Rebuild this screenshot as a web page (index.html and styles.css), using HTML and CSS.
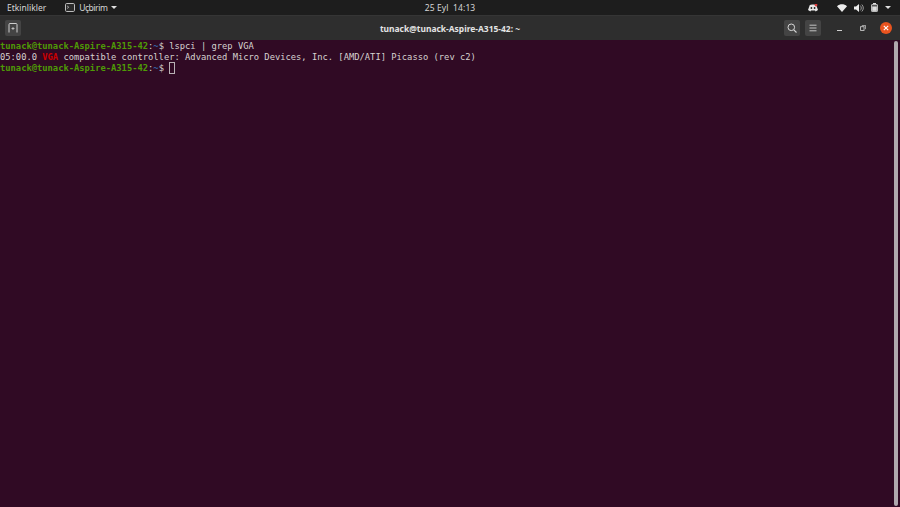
FILE: index.html
```html
<!DOCTYPE html>
<html lang="tr">
<head>
<meta charset="utf-8">
<title>Terminal</title>
<link rel="stylesheet" href="styles.css">
</head>
<body>
<header class="topbar">
  <div class="top-left">
    <span class="activities">Etkinlikler</span>
    <span class="app">
      <svg class="app-icon" width="10" height="9" viewBox="0 0 10 9"><rect x=".5" y=".5" width="9" height="8" rx="1.2" fill="#2a2a2a" stroke="#bdbdbd"/><path d="M2.2 3l1.5 1.2-1.5 1.2" fill="none" stroke="#cfcfcf" stroke-width=".8"/></svg>
      <span class="app-name">Uçbirim</span>
      <i class="caret"></i>
    </span>
  </div>
  <div class="clock">25 Eyl&nbsp; 14:13</div>
  <div class="tray">
    <svg class="discord" width="10" height="8" viewBox="0 0 10 8"><path d="M1.8 1 4 .5h2L8.2 1 10 6 7.6 7.500 7 6.500H3l-.6 1L0 6z" fill="#e8e8e8"/><circle cx="3.400" cy="4" r=".9" fill="#222"/><circle cx="6.600" cy="4" r=".9" fill="#222"/><circle cx="8" cy="1" r="1.400" fill="#e04040"/></svg>
    <svg class="wifi" width="10" height="8" viewBox="0 0 10 8"><path d="M0 2.200C3 -.4 7 -.4 10 2.200L5 8z" fill="#ececec"/></svg>
    <svg class="vol" width="10" height="8" viewBox="0 0 10 8"><path d="M0 2.500h2L5 0v8L2 5.500H0z" fill="#ececec"/><path d="M6.200 1.500c1.400 1.500 1.400 3.500 0 5M7.800.5c2 2 2 5 0 7" fill="none" stroke="#9a9a9a"/></svg>
    <svg class="batt" width="7" height="9" viewBox="0 0 7 9"><rect x="2" y="0" width="3" height="1" fill="#ddd"/><rect x=".5" y="1.500" width="6" height="7" rx=".6" fill="#555" stroke="#ddd" stroke-width=".8"/><rect x="1.200" y="3.500" width="4.600" height="4.400" fill="#ddd"/></svg>
    <i class="caret"></i>
  </div>
</header>
<section class="titlebar">
  <div class="tb-left">
    <button class="tbtn">
      <svg width="10" height="10" viewBox="0 0 10 10"><path d="M1 9.500V1.500a1 1 0 0 1 1-1h6a1 1 0 0 1 1 1v8" fill="none" stroke="#cfcfcf"/><path d="M3.500 5.500h3M5 4v3" stroke="#cfcfcf" stroke-width=".8"/></svg>
    </button>
  </div>
  <div class="title">tunack@tunack-Aspire-A315-42: ~</div>
  <div class="tb-right">
    <button class="tbtn">
      <svg width="10" height="10" viewBox="0 0 10 10"><circle cx="4.300" cy="4.300" r="3.300" fill="none" stroke="#d8d8d8" stroke-width="1"/><path d="M6.800 6.800L9.500 9.500" stroke="#d8d8d8" stroke-width="1.100"/></svg>
    </button>
    <button class="tbtn">
      <svg width="8" height="8" viewBox="0 0 8 8"><path d="M.5 1.200h7M.5 4h7M.5 6.800h7" stroke="#d0d0d0" stroke-width=".9"/></svg>
    </button>
    <span class="wbtn min"><i></i></span>
    <span class="wbtn restore"><svg width="6" height="6" viewBox="0 0 7 7"><path d="M2.500 1V.5h4v4H6" fill="none" stroke="#c4c4c4" stroke-width=".9"/><rect x=".7" y="2" width="4" height="4.300" fill="none" stroke="#d0d0d0" stroke-width="1"/></svg></span>
    <span class="close"><svg width="6" height="6" viewBox="0 0 6 6"><path d="M.8.8l4.400 4.400M5.200.8L.8 5.200" stroke="#fff" stroke-width="1.100"/></svg></span>
  </div>
</section>
<main class="terminal">
  <pre class="output"><span class="user">tunack@tunack-Aspire-A315-42</span>:<span class="path">~</span>$ lspci | grep VGA
05:00.0 <b class="match">VGA</b> compatible controller: Advanced Micro Devices, Inc. [AMD/ATI] Picasso (rev c2)
<span class="user">tunack@tunack-Aspire-A315-42</span>:<span class="path">~</span>$ <span class="cursor"></span></pre>
  <div class="scrollbar"><div class="thumb"></div></div>
</main>
</body>
</html>
```
FILE: styles.css
```css
* { box-sizing: border-box; }
html, body { margin: 0; height: 100%; }
body {
  width: 900px;
  height: 507px;
  overflow: hidden;
  display: flex;
  flex-direction: column;
  background: #300a24;
  font-family: "Noto Sans", "Open Sans", sans-serif;
}
.topbar {
  height: 15px;
  flex: none;
  background: #1d1d1d;
  color: #d6d6d6;
  font-size: 8.500px;
  display: grid;
  grid-template-columns: 1fr auto 1fr;
  align-items: center;
}
.top-left { display: flex; align-items: center; padding-left: 7px; gap: 19px; }
.app { display: flex; align-items: center; gap: 4px; }
.app-name { letter-spacing: -0.450px; }
.caret {
  display: block;
  width: 0;
  height: 0;
  border-left: 3px solid transparent;
  border-right: 3px solid transparent;
  border-top: 3px solid #e0e0e0;
}
.clock { text-align: center; letter-spacing: 0.100px; }
.tray { display: flex; align-items: center; justify-content: flex-end; padding-right: 9px; }
.discord { margin-right: 19px; }
.wifi { margin-right: 7px; }
.vol { margin-right: 7px; }
.batt { margin-right: 7px; }
.titlebar {
  height: 25px;
  flex: none;
  background: #2e2e2e;
  border-top: 1px solid #353535;
  color: #e4e4e4;
  display: grid;
  grid-template-columns: 1fr auto 1fr;
  align-items: center;
}
.tb-left { padding-left: 5px; display: flex; }
.tbtn {
  width: 16px;
  height: 16px;
  padding: 0;
  border: 0;
  border-radius: 2px;
  background: #444;
  display: flex;
  align-items: center;
  justify-content: center;
}
.title { font-size: 8.450px; font-weight: 700; }
.tb-right { display: flex; align-items: center; justify-content: flex-end; padding-right: 8px; gap: 5px; }
.wbtn { display: flex; align-items: center; justify-content: center; width: 16px; height: 16px; }
.min { margin-left: 5px; }
.min i { display: block; width: 5px; height: 1px; margin-top: 4px; background: #cfcfcf; }
.restore { margin-left: 3px; }
.close {
  width: 12px;
  height: 12px;
  margin-left: 4px;
  border-radius: 50%;
  background: #e9541f;
  display: flex;
  align-items: center;
  justify-content: center;
}
.terminal { flex: 1; min-height: 0; display: flex; background: #300a24; }
.output {
  flex: 1;
  margin: 0;
  padding: 1px 0 0;
  color: #d6d2d0;
  font-family: "DejaVu Sans Mono", monospace;
  font-size: 8.790px;
  line-height: 10.670px;
}
.user { color: #4e9a06; font-weight: 700; }
.path { color: #3465a4; font-weight: 700; }
.match { color: #cc0000; font-weight: 700; }
.cursor {
  display: inline-block;
  width: 6px;
  height: 12px;
  vertical-align: -3px;
  border: 1px solid #b8b0b4;
}
.scrollbar { width: 8px; flex: none; padding: 1px 2px 1px 2px; }
.thumb { height: 100%; background: #b0a8ae; border-radius: 2px; }
```
